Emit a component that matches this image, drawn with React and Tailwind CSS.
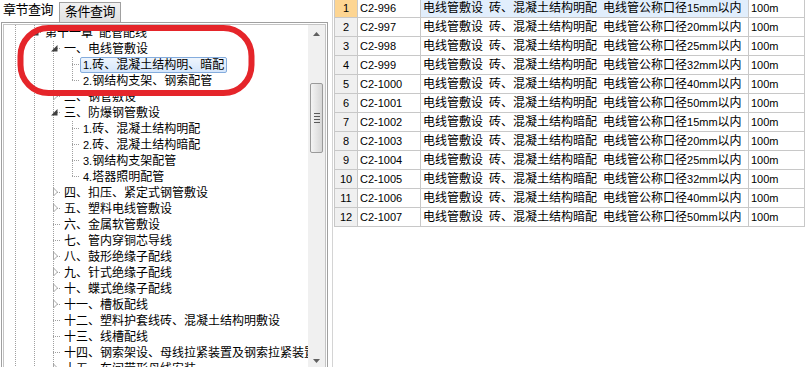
import React from "react";

const treeRows = [
  { cols: "IO", label: "第十一章 配管配线" },
  { cols: "IIO", label: "一、电线管敷设" },
  { cols: "IIIT", label: "1.砖、混凝土结构明、暗配", selected: true },
  { cols: "IIIL", label: "2.钢结构支架、钢索配管" },
  { cols: "IIC", label: "二、钢管敷设" },
  { cols: "IIO", label: "三、防爆钢管敷设" },
  { cols: "IIIT", label: "1.砖、混凝土结构明配" },
  { cols: "IIIT", label: "2.砖、混凝土结构暗配" },
  { cols: "IIIT", label: "3.钢结构支架配管" },
  { cols: "IIIL", label: "4.塔器照明配管" },
  { cols: "IIC", label: "四、扣压、紧定式钢管敷设" },
  { cols: "IIC", label: "五、塑料电线管敷设" },
  { cols: "IIT", label: "六、金属软管敷设" },
  { cols: "IIT", label: "七、管内穿铜芯导线" },
  { cols: "IIC", label: "八、鼓形绝缘子配线" },
  { cols: "IIC", label: "九、针式绝缘子配线" },
  { cols: "IIC", label: "十、蝶式绝缘子配线" },
  { cols: "IIC", label: "十一、槽板配线" },
  { cols: "IIT", label: "十二、塑料护套线砖、混凝土结构明敷设" },
  { cols: "IIT", label: "十三、线槽配线" },
  { cols: "IIT", label: "十四、钢索架设、母线拉紧装置及钢索拉紧装置" },
  { cols: "IIC", label: "十五、车间带形母线安装" },
];

const sizes = ["15", "20", "25", "32", "40", "50"];
const gridRows = [...sizes.map((s) => ["明配", s]), ...sizes.map((s) => ["暗配", s])].map(
  ([kind, size], i) => ({
    no: i + 1,
    code: `C2-${996 + i}`,
    desc: `电线管敷设 砖、混凝土结构${kind} 电线管公称口径${size}mm以内`,
    unit: "100m",
  })
);

// CJK at 12px, ascii runs at 11px, spaces as half-width gaps
function Mixed({ text }) {
  const parts = text.split(/( |[!-~]+)/).filter(Boolean);
  return parts.map((p, i) =>
    p === " " ? (
      <span key={i} className="inline-block w-[6px]" />
    ) : /^[!-~]+$/.test(p) ? (
      <span key={i} className="text-[11px]">{p}</span>
    ) : (
      <span key={i}>{p}</span>
    )
  );
}

function Guide({ kind }) {
  const dot = { stroke: "#a0a0a0", strokeDasharray: "1 1", strokeWidth: 1 };
  return (
    <svg width="19" height="16" className="shrink-0">
      {(kind === "I" || kind === "T" || kind === "O" || kind === "C") && (
        <line x1="11.5" y1="0" x2="11.5" y2="16" {...dot} />
      )}
      {kind === "L" && <line x1="11.5" y1="0" x2="11.5" y2="8" {...dot} />}
      {kind !== "I" && <line x1="11" y1="7.5" x2="19" y2="7.5" {...dot} />}
      {kind === "O" && <polygon points="15.5,4 15.5,10.5 9,10.5" fill="#404040" />}
      {kind === "C" && (
        <polygon points="11.5,3 15.5,7 11.5,11" fill="#ffffff" stroke="#a6a6a6" strokeWidth="1" />
      )}
    </svg>
  );
}

function Scrollbar() {
  return (
    <div className="w-[17px] shrink-0 bg-[#f0f0f0] flex flex-col">
      <div className="h-[17px] flex items-center justify-center">
        <svg width="7" height="4">
          <polygon points="3.5,0 7,4 0,4" fill="#606060" />
        </svg>
      </div>
      <div className="h-[41px]" />
      <div className="h-[70px] mx-[2px] rounded-[2px] border border-[#9a9a9a] bg-linear-to-r from-[#f4f4f4] to-[#d6d6d6] flex flex-col items-center justify-center gap-[2px]">
        <div className="w-[6px] h-px bg-[#5a5a5a]" />
        <div className="w-[6px] h-px bg-[#5a5a5a]" />
        <div className="w-[6px] h-px bg-[#5a5a5a]" />
        <div className="w-[6px] h-px bg-[#5a5a5a]" />
      </div>
      <div className="flex-1" />
      <div className="h-[17px] flex items-center justify-center">
        <svg width="7" height="4">
          <polygon points="0,0 7,0 3.5,4" fill="#606060" />
        </svg>
      </div>
    </div>
  );
}

function Tree() {
  return (
    <div className="flex-1 min-w-0 overflow-hidden">
      {treeRows.map((row, i) => (
        <div key={i} className="h-[16px] flex items-center whitespace-nowrap">
          {row.cols.split("").map((c, j) => (
            <Guide key={j} kind={c} />
          ))}
          <span
            className={
              row.selected
                ? "h-[16px] leading-[14px] px-[2px] border border-[#84acdd] rounded-[2px] bg-linear-to-b from-[#eef5fd] to-[#d5e6fb]"
                : "h-[16px] leading-[14px] px-[2px] border border-transparent"
            }
          >
            <Mixed text={row.label} />
          </span>
        </div>
      ))}
    </div>
  );
}

function Grid() {
  return (
    <div className="-mt-px">
      {gridRows.map((r) => {
        const sel = r.no === 1;
        return (
          <div key={r.no} className="flex h-[19px] leading-[18px] border-b border-[#c8c8c8] w-[471px] whitespace-nowrap">
            <div
              className={
                sel
                  ? "w-[24px] border-l border-r border-[#c8c8c8] bg-[#fdd592] text-center"
                  : "w-[24px] border-l border-r border-[#c8c8c8] bg-[#f0f0f0] text-center"
              }
            >
              <span className="text-[11px]">{r.no}</span>
            </div>
            <div className="w-[63px] border-r border-[#c8c8c8] pl-[2px]">
              <span className="text-[11px]">{r.code}</span>
            </div>
            <div className={sel ? "w-[328px] border-r border-[#c8c8c8] pl-[2px] bg-[#e1eefc]" : "w-[328px] border-r border-[#c8c8c8] pl-[2px]"}>
              <Mixed text={r.desc} />
            </div>
            <div className="w-[56px] border-r border-[#c8c8c8] pl-[2px]">
              <span className="text-[11px]">{r.unit}</span>
            </div>
          </div>
        );
      })}
    </div>
  );
}

export default function App() {
  return (
    <div className="relative w-[812px] h-[367px] overflow-hidden bg-white text-black text-[12px] font-['Liberation_Sans','Noto_Sans_CJK_SC',sans-serif] flex">
      {/* left: chapter tree */}
      <div className="w-[330px] h-[372px] shrink-0 flex flex-col">
        <div className="h-[22px] flex items-end">
          <div className="h-[22px] pl-[3px] pr-[6px] leading-[20px] text-[13px] tracking-[-0.5px]">章节查询</div>
          <div className="h-[20px] px-[5px] leading-[18px] text-[13px] tracking-[-0.5px] border border-b-0 border-[#a0a0a0] bg-linear-to-b from-[#f2f2f2] to-[#e0e0e0]">
            条件查询
          </div>
        </div>
        <div className="flex-1 min-h-0 ml-px w-[327px] border border-[#a0a0a0] p-px flex">
          <div className="flex-1 min-w-0 border border-[#c4c4c4] flex">
            <Tree />
            <Scrollbar />
          </div>
        </div>
      </div>

      {/* right: quota grid */}
      <div className="flex-1 ml-[2px] border-l border-[#d4d4d4] pl-px">
        <Grid />
      </div>

      {/* red annotation */}
      <svg className="absolute inset-0 pointer-events-none" width="812" height="367">
        <rect x="20.5" y="28" width="231" height="65" rx="28" fill="none" stroke="#e5252a" strokeWidth="6" />
      </svg>
    </div>
  );
}
